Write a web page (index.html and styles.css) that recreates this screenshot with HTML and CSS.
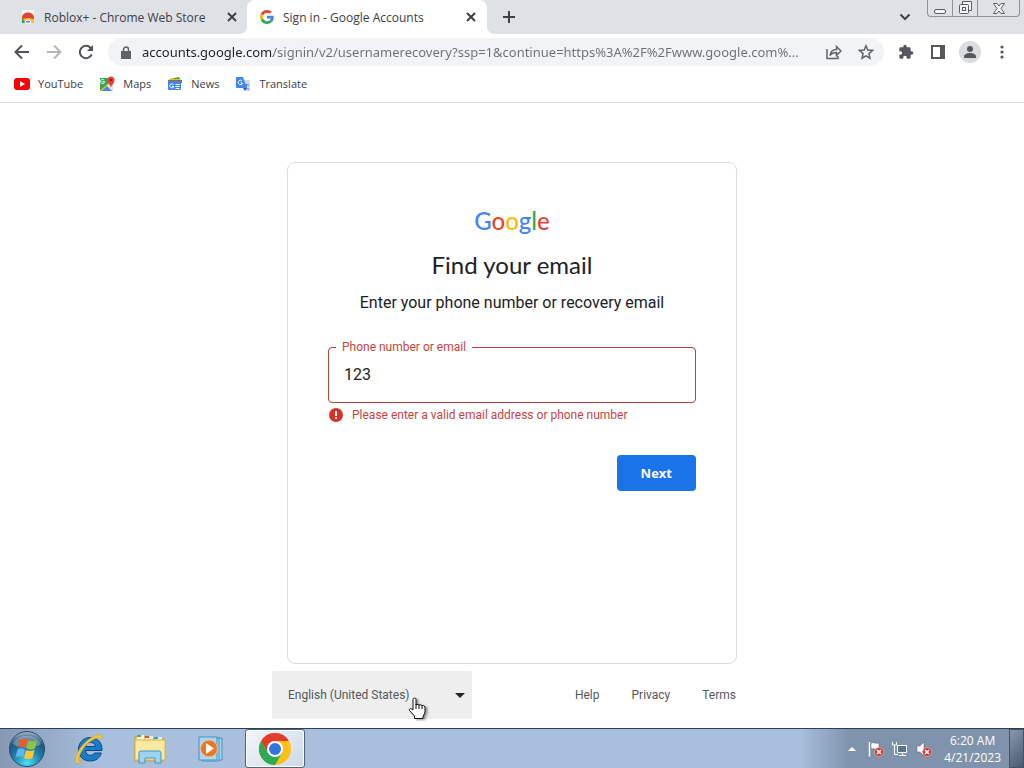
FILE: index.html
```html
<!DOCTYPE html>
<html lang="en">
  <head>
    <meta charset="utf-8" />
    <meta name="viewport" content="width=device-width, initial-scale=1.0" />
    <title>Sign in - Google Accounts</title>
    <link rel="stylesheet" href="styles.css">
  </head>

  <body>
    <!-- ______TABS______ -->
    <header class="tabstrip">
      <div class="tab">
        <svg class="favicon" viewBox="0 0 16 16">
          <path d="M2 1h12v12H2z" fill="#f4f5f6" />
          <path d="M2 14V9a6 5 0 0 1 12 0v5z" fill="#fbc02d" />
          <path d="M2 10V8.500a6 5 0 0 1 12 0V10l-6-1z" fill="#db4437" />
          <path d="M2 9l4 5H2z" fill="#2e9d57" />
          <path d="M5 14a3 3 0 0 1 6 0z" fill="#4285f4" stroke="#fff" />
        </svg>
        <span class="tab-title">Roblox+ - Chrome Web Store</span>
        <button class="icon-btn" aria-label="Close tab">
          <svg class="cross" viewBox="0 0 10 10"><path d="M1 1l8 8M9 1L1 9" /></svg>
        </button>
      </div>
      <div class="tab active">
        <svg class="favicon" viewBox="0 0 48 48">
          <path fill="#EA4335" d="M24 9.500c3.540 0 6.710 1.220 9.210 3.600l6.850-6.850C35.900 2.380 30.470 0 24 0 14.620 0 6.510 5.380 2.560 13.220l7.980 6.190C12.430 13.720 17.740 9.500 24 9.500z" />
          <path fill="#4285F4" d="M46.980 24.550c0-1.570-.15-3.090-.38-4.550H24v9.020h12.940c-.58 2.960-2.260 5.480-4.780 7.180l7.730 6c4.510-4.180 7.090-10.360 7.090-17.650z" />
          <path fill="#FBBC05" d="M10.530 28.590c-.48-1.450-.76-2.990-.76-4.590s.27-3.140.76-4.590l-7.980-6.190C.92 16.460 0 20.120 0 24c0 3.880.92 7.540 2.560 10.780z" />
          <path fill="#34A853" d="M24 48c6.480 0 11.930-2.130 15.890-5.810l-7.730-6c-2.150 1.450-4.920 2.300-8.160 2.300-6.260 0-11.570-4.220-13.470-9.910l-7.980 6.190C6.510 42.620 14.620 48 24 48z" />
        </svg>
        <span class="tab-title">Sign in - Google Accounts</span>
        <button class="icon-btn" aria-label="Close tab">
          <svg class="cross" viewBox="0 0 10 10"><path d="M1 1l8 8M9 1L1 9" /></svg>
        </button>
      </div>
      <button class="icon-btn new-tab" aria-label="New tab">
        <svg class="plus" viewBox="0 0 12 12"><path d="M6 0v12M0 6h12" /></svg>
      </button>
      <button class="icon-btn tab-search" aria-label="Search tabs">
        <svg class="chevron" viewBox="0 0 12 8"><path d="M1.500 1.500L6 6l4.500-4.500" /></svg>
      </button>
      <div class="window-buttons">
        <button aria-label="Minimize">
          <svg viewBox="0 0 14 14"><rect x="1.500" y="8.500" width="11" height="4" rx="1.500" /></svg>
        </button>
        <button aria-label="Restore">
          <svg viewBox="0 0 14 14"><path d="M4.500 3.500v-3h9v9h-3" /><rect x="1.500" y="3.500" width="9" height="9" rx="1" /><rect x="4.500" y="6.500" width="3" height="3" /></svg>
        </button>
        <button class="wide" aria-label="Close">
          <svg viewBox="0 0 14 14"><path d="M1.500 2.500h3.500l2 2.500 2-2.500h3.500L9 7.500l3.500 5H9l-2-2.500-2 2.500H1.500l3.500-5z" /></svg>
        </button>
      </div>
    </header>

    <!-- ______ADDRESS BAR______ -->
    <nav class="toolbar">
      <button class="icon-btn" aria-label="Back">
        <svg class="nav-icon" viewBox="0 0 16 16"><path d="M15 8H2M8 1.500L1.500 8 8 14.500" /></svg>
      </button>
      <button class="icon-btn" aria-label="Forward" disabled>
        <svg class="nav-icon" viewBox="0 0 16 16"><path d="M1 8h13M8 1.500L14.500 8 8 14.500" /></svg>
      </button>
      <button class="icon-btn" aria-label="Reload">
        <svg class="nav-icon" viewBox="0 0 16 16"><path d="M13.700 10.500A6.200 6.200 0 1 1 12.600 3.800L14 5.200" /><path class="solid" d="M15 1v6H9z" /></svg>
      </button>
      <div class="omnibox">
        <svg class="lock" viewBox="0 0 10 13"><path d="M0 5h10v8H0z" fill="#5f6368" /><path d="M2.500 5.500V3.500a2.500 2.500 0 0 1 5 0v2" fill="none" stroke="#5f6368" stroke-width="1.500" /></svg>
        <input class="url" type="text" aria-label="Address" value="accounts.google.com/signin/v2/usernamerecovery?ssp=1&amp;continue=https%3A%2F%2Fwww.google.com%..." />
        <button class="icon-btn" aria-label="Share">
          <svg class="thin-icon" viewBox="0 0 16 16"><path d="M1 5v9.500h11V12" /><path d="M4 11.500c.5-4 3-6 6.500-6v-3L15 7l-4.500 4.500v-3c-3 0-5 .8-6.500 3z" /></svg>
        </button>
        <button class="icon-btn" aria-label="Bookmark this tab">
          <svg class="thin-icon" viewBox="0 0 16 16"><path d="M8 1.800l1.800 4.300 4.700.4-3.600 3.100 1.100 4.600L8 11.800l-4 2.400 1.100-4.600L1.500 6.500l4.700-.4z" /></svg>
        </button>
      </div>
      <button class="icon-btn" aria-label="Extensions">
        <svg class="fill-icon" viewBox="0 0 24 24"><path d="M20.500 11H19V7c0-1.100-.9-2-2-2h-4V3.500a2.500 2.500 0 0 0-5 0V5H4c-1.100 0-2 .9-2 2v3.800h1.500a2.700 2.700 0 0 1 0 5.400H2V20c0 1.100.9 2 2 2h3.800v-1.500a2.700 2.700 0 0 1 5.400 0V22H17c1.100 0 2-.9 2-2v-4h1.500a2.500 2.500 0 0 0 0-5z" /></svg>
      </button>
      <button class="icon-btn" aria-label="Side panel">
        <svg class="fill-icon" viewBox="0 0 16 16"><path fill-rule="evenodd" d="M1 1h14v14H1zm2 2v10h7V3z" /></svg>
      </button>
      <button class="icon-btn avatar" aria-label="Profile">
        <svg class="fill-icon" viewBox="0 0 16 16"><circle cx="8" cy="5" r="3" /><path d="M2 13c0-3 3-4 6-4s6 1 6 4v1H2z" /></svg>
      </button>
      <button class="icon-btn" aria-label="Menu">
        <svg class="fill-icon" viewBox="0 0 16 16"><circle cx="8" cy="3" r="1.600" /><circle cx="8" cy="8" r="1.600" /><circle cx="8" cy="13" r="1.600" /></svg>
      </button>
    </nav>

    <!-- ______BOOKMARKS______ -->
    <nav class="bookmarks">
      <a href="#">
        <svg viewBox="0 0 16 16"><rect y="2" width="16" height="12" rx="3" fill="#f00" /><path d="M6 5l5 3-5 3z" fill="#fff" /></svg>
        YouTube
      </a>
      <a href="#">
        <svg viewBox="0 0 16 16">
          <path d="M1 2h13v13H1z" fill="#e8eaed" />
          <path d="M1 2h10v4l-10 9z" fill="#34a853" />
          <path d="M1 15L12 5l2 2-8 8z" fill="#fbbc05" />
          <path d="M3 15l5-5 5 5z" fill="#4285f4" />
          <path d="M8 10l6 5V8l-3-1z" fill="#dfe3e8" />
          <path d="M3.500 5.500h2a2 2 0 1 1-.6-1.500" fill="none" stroke="#fff" />
          <path d="M12 12c0-3-3.500-4-3.500-8a3.500 3.500 0 0 1 7 0c0 4-3.500 5-3.500 8z" fill="#ea4335" />
          <circle cx="12" cy="4" r="1.300" fill="#8c1d18" />
        </svg>
        Maps
      </a>
      <a href="#">
        <svg viewBox="0 0 16 16">
          <path d="M3 3l9-2 2 4H3z" fill="#34a853" />
          <path d="M2 3h11l1 4H2z" fill="#fbbc05" />
          <path d="M1 4h14v3H1z" fill="#6e7480" />
          <rect x="1" y="6" width="13" height="8" rx="1" fill="#4285f4" />
          <path d="M6.500 8.700a2 2 0 1 0 .3 1.800H5M8.500 8.500h4M8.500 10.500h4M8.500 12.500h4" fill="none" stroke="#fff" />
        </svg>
        News
      </a>
      <a href="#">
        <svg viewBox="0 0 16 16">
          <path d="M7 4h8v11H10z" fill="#d5dae2" />
          <path d="M9 9h5M11.500 8v1c0 2-1 3-2 4M10 10c1 2 2 3 4 3" fill="none" stroke="#5f7fbf" />
          <path d="M1 1h7l4 11H2a1 1 0 0 1-1-1z" fill="#4285f4" />
          <path d="M8 12h4l-2 3z" fill="#2a56c6" />
          <path d="M7 5a2.200 2.200 0 1 0 .5 2H5.500" fill="none" stroke="#fff" />
        </svg>
        Translate
      </a>
    </nav>

    <!-- ______SIGN IN PAGE______ -->
    <main>
      <form class="card">
        <div class="logo" aria-label="Google"><span class="blue">G</span><span class="red">o</span><span class="yellow">o</span><span class="blue">g</span><span class="green">l</span><span class="red">e</span></div>
        <h1>Find your email</h1>
        <p class="subtitle">Enter your phone number or recovery email</p>
        <fieldset class="field">
          <legend><label for="identifier">Phone number or email</label></legend>
          <input id="identifier" type="text" value="123" aria-describedby="error" />
        </fieldset>
        <p class="error" id="error">
          <svg viewBox="0 0 16 16"><circle cx="8" cy="8" r="7" fill="#d93025" /><path d="M7 4h2v5H7zM7 10h2v2H7z" fill="#fff" /></svg>
          Please enter a valid email address or phone number
        </p>
        <button class="next" type="button">Next</button>
      </form>

      <footer>
        <div class="language">
          <select aria-label="Language">
            <option>English (United States)</option>
          </select>
          <!-- mouse pointer -->
          <svg class="pointer" viewBox="0 0 18 24">
            <path d="M5 14V3.500a1.500 1.500 0 0 1 3 0V9l1-.8 2 .8 1.500-.3 1.500 1 1.500-.2 1.500 1.500v5L15 21v1.500H6.500V20L1.500 14.500c-.8-1.500.8-2.500 2-1.500z" fill="#fff" stroke="#111" />
            <path d="M8 8v5M11 9v4M14 10v3" stroke="#111" fill="none" />
          </svg>
        </div>
        <a href="#">Help</a>
        <a href="#">Privacy</a>
        <a href="#">Terms</a>
      </footer>
    </main>

    <!-- ______TASKBAR______ -->
    <div class="taskbar">
      <button class="start" aria-label="Start">
        <svg viewBox="0 0 38 38">
          <defs>
            <radialGradient id="orb" cx=".5" cy=".9" r=".9">
              <stop offset="0" stop-color="#4fe0f4" />
              <stop offset=".45" stop-color="#1d7fae" />
              <stop offset=".75" stop-color="#24557f" />
              <stop offset="1" stop-color="#a8bccb" />
            </radialGradient>
          </defs>
          <circle cx="19" cy="19" r="17.500" fill="url(#orb)" stroke="#294a68" />
          <path d="M5 14a15 13 0 0 1 28 0c-8 5-20 5-28 0z" fill="#fff" opacity=".3" />
          <path d="M12 10c3-2 5-1 7.500 0l-2 8c-2-1-4.500-2-7.500 0z" fill="#f0592a" />
          <path d="M20.500 10.500c3 1.500 5 1 8.500 0l-2 8c-3 1.500-5.500 1-8.500 0z" fill="#8cc63e" />
          <path d="M9.500 19.500c3-2 5-1 7.500 0l-2 8c-2-1-4.500-2-7.500 0z" fill="#5cb8ef" />
          <path d="M18 20c3 1.500 5 1 8.500 0l-2 8c-3 1.500-5.500 1-8.500 0z" fill="#fdc72f" />
        </svg>
      </button>
      <button class="app" aria-label="Internet Explorer">
        <svg viewBox="0 0 32 32">
          <path fill-rule="evenodd" d="M29 17.500H12.500c.3 3 2 4.800 4.800 4.800 2 0 3.400-.8 4.200-2.300h6.800c-1.500 5.500-6 8-11 8C10.500 28 5.500 23.500 5.500 16.500S10.500 4.500 17.300 4.500 29.500 9.500 29 17.500zM12.500 13.500h9.800c-.3-2.500-2-4-4.800-4s-4.700 1.500-5 4z" fill="#1a7cc9" stroke="#0c4780" />
          <path d="M4 30C-1 28 6 14 15 7c6-5 13-7 14-4 .5 1.500 0 3-1 4 0-3-4-3-10 1C10 13 4 25 6 28c1 1 2 .5 5-1-2 2-5 4-7 3z" fill="#f6c83a" stroke="#d39b1c" stroke-width=".5" />
        </svg>
      </button>
      <button class="app" aria-label="Windows Explorer">
        <svg viewBox="0 0 32 32">
          <path d="M1 4h13l2 2h14v22H1z" fill="#edcf68" stroke="#c59c38" />
          <path d="M3 2h7v5H3z" fill="#f5f0d0" /><path d="M3 2h4v2H3z" fill="#4caf50" />
          <path d="M11 3h8v5h-8z" fill="#f5f0d0" /><path d="M11 3h4v2h-4z" fill="#d7573c" />
          <path d="M20 4h8v4h-8z" fill="#e8f0f7" /><path d="M20 4h4v2h-4z" fill="#4794c4" />
          <path d="M1 7h30v20H1z" fill="#fae9a0" stroke="#d4b04b" />
          <path d="M5 30V20a2 2 0 0 1 2-2h18a2 2 0 0 1 2 2v10h-6v-5H11v5z" fill="#9ad4f0" stroke="#4794c4" />
        </svg>
      </button>
      <button class="app" aria-label="Windows Media Player">
        <svg viewBox="0 0 32 32">
          <path d="M9 5h18v22H9z" fill="#a6d4ee" stroke="#4191c1" />
          <path d="M7 5h17v23H7z" fill="#bfe1f4" stroke="#4191c1" />
          <path d="M4 4h18v23H4z" fill="#a9d8ef" stroke="#4191c1" />
          <circle cx="14" cy="15.500" r="8.500" fill="#ee7623" stroke="#e9c3a2" />
          <path d="M11 10l8 5.500-8 5.500z" fill="#fff" />
        </svg>
      </button>
      <button class="app running" aria-label="Google Chrome">
        <svg viewBox="0 0 32 32">
          <circle cx="16" cy="16" r="16" fill="#fbc116" />
          <path d="M2.140 8A16 16 0 0 0 16 32l6.930-12L16 16 9.070 20z" fill="#2da94f" />
          <path d="M2.140 8l6.930 12L16 8H29.860A16 16 0 0 0 2.140 8z" fill="#e33b2e" />
          <circle cx="16" cy="16" r="8" fill="#fff" />
          <circle cx="16" cy="16" r="6" fill="#3274e0" />
        </svg>
      </button>

      <div class="tray">
        <svg class="tray-arrow" viewBox="0 0 8 4"><path d="M4 0l4 4H0z" fill="#fff" /></svg>
        <svg viewBox="0 0 16 16">
          <path d="M1.500 1v14.500" stroke="#fff" stroke-width="1.500" /><path d="M3 2c3-1 4 1 8 0v6c-4 1-5-1-8 0z" fill="#fff" stroke="#4c5c6d" stroke-width=".5" />
          <circle cx="11" cy="11" r="4.500" fill="#d63a31" stroke="#f3c6c1" stroke-width=".5" /><path d="M9 9l4 4M13 9l-4 4" stroke="#fff" stroke-width="1.500" />
        </svg>
        <svg viewBox="0 0 16 16">
          <path d="M5.500 4.500h9v7h-9zM7 14.500h7M10.500 12v2" fill="#5d7188" stroke="#fff" /><path d="M.5 1v3h4V1M2.500 4v9.500H6" fill="none" stroke="#fff" />
        </svg>
        <svg viewBox="0 0 16 16">
          <path d="M1 5h3l4-4v14l-4-4H1z" fill="#fff" stroke="#4c5c6d" stroke-width=".5" />
          <circle cx="11" cy="11" r="4.500" fill="#d63a31" stroke="#f3c6c1" stroke-width=".5" /><path d="M9 9l4 4M13 9l-4 4" stroke="#fff" stroke-width="1.500" />
        </svg>
        <div class="clock">6:20 AM<br />4/21/2023</div>
        <button class="show-desktop" aria-label="Show desktop"></button>
      </div>
    </div>
  </body>
</html>
```
FILE: styles.css
```css
* {
  box-sizing: border-box;
}

body {
  margin: 0;
  min-height: 100vh;
  display: flex;
  flex-direction: column;
  font-family: "Open Sans", "Noto Sans", sans-serif;
  font-size: 12px;
  color: #3c4043;
  background-color: #fff;
}

button {
  font: inherit;
  padding: 0;
  border: none;
  background: none;
}

a {
  color: inherit;
  text-decoration: none;
}

svg {
  display: block;
  flex: none;
}

.icon-btn {
  display: flex;
  align-items: center;
  justify-content: center;
  flex: none;
  width: 32px;
  height: 28px;
}

/*_____TABS_____*/

.tabstrip {
  display: flex;
  height: 34px;
  background-color: #dee1e6;
}

.tab {
  display: flex;
  align-items: center;
  gap: 8px;
  flex: 0 1 247px;
  padding: 0 3px 0 20px;
}

.tab.active {
  position: relative;
  flex-basis: 240px;
  padding: 0 4px 0 12px;
  border-radius: 8px 8px 0 0;
  background-color: #fff;
}

/* curved feet of the active tab */
.active::before,
.active::after {
  content: "";
  position: absolute;
  bottom: 0;
  width: 8px;
  height: 8px;
}

.active::before {
  right: 100%;
  background: radial-gradient(circle at 0 0, transparent 8px, #fff 8px);
}

.active::after {
  left: 100%;
  background: radial-gradient(circle at 100% 0, transparent 8px, #fff 8px);
}

.tab-title {
  flex: 1;
  white-space: nowrap;
  overflow: hidden;
}

.tab .icon-btn {
  width: 24px;
}

.favicon {
  width: 16px;
  height: 16px;
}

.active .favicon {
  width: 14px;
  height: 14px;
  margin: 0 1px;
}

.cross,
.plus,
.chevron {
  width: 10px;
  fill: none;
  stroke: #3c4043;
  stroke-width: 2;
}

.plus,
.chevron {
  width: 12px;
}

.new-tab {
  align-self: center;
  margin-left: 6px;
}

.tab-search {
  align-self: center;
  margin-left: auto;
}

.window-buttons {
  display: flex;
  height: 17px;
  margin: 0 4px 0 6px;
  border: 1px solid #8d9299;
  border-top: none;
  border-radius: 0 0 4px 4px;
}

.window-buttons button {
  display: flex;
  justify-content: center;
  align-items: center;
  width: 25px;
  border-right: 1px solid #8d9299;
}

.window-buttons .wide {
  width: 41px;
  border-right: none;
}

.window-buttons svg {
  width: 14px;
  height: 14px;
  fill: #f1f3f5;
  stroke: #5a5e66;
}

/*_____ADDRESS BAR_____*/

.toolbar {
  display: flex;
  align-items: center;
  height: 36px;
  padding: 0 6px;
}

.nav-icon {
  width: 16px;
  height: 16px;
  fill: none;
  stroke: #505357;
  stroke-width: 2;
}

.nav-icon .solid {
  fill: #505357;
  stroke: none;
}

.icon-btn:disabled .nav-icon {
  stroke: #b5b7ba;
}

.omnibox {
  display: flex;
  align-items: center;
  flex: 1;
  height: 28px;
  margin: 0 6px;
  padding: 0 2px 0 13px;
  border-radius: 14px;
  background-color: #f1f3f4;
}

.lock {
  width: 10px;
  height: 13px;
}

/* domain is dark, the rest of the address is grey */
.url {
  flex: 1;
  min-width: 0;
  margin-left: 11px;
  padding: 0;
  border: none;
  font: 13px "Noto Sans", "Open Sans", sans-serif;
  background: linear-gradient(to right, #202124 131px, #6b6f74 131px);
  background-clip: text;
  -webkit-background-clip: text;
  -webkit-text-fill-color: transparent;
}

.thin-icon {
  width: 16px;
  height: 16px;
  fill: none;
  stroke: #5f6368;
  stroke-width: 1.5;
}

.fill-icon {
  width: 16px;
  height: 16px;
  fill: #54585c;
}

.avatar::before {
  content: "";
  width: 22px;
  height: 22px;
  margin-right: -19px;
  border-radius: 50%;
  background-color: #dadce0;
}

.avatar .fill-icon {
  margin-right: 3px;
}

/*_____BOOKMARKS_____*/

.bookmarks {
  display: flex;
  align-items: center;
  gap: 16px;
  height: 33px;
  padding: 0 14px 5px;
  border-bottom: 1px solid #dadce0;
  font-size: 11px;
}

.bookmarks a {
  display: flex;
  align-items: center;
  gap: 8px;
}

.bookmarks svg {
  width: 16px;
  height: 16px;
}

/*_____SIGN IN PAGE_____*/

main {
  flex: 1;
  padding: 59px 16px 0;
  font-family: Roboto, sans-serif;
}

.card {
  display: flex;
  flex-direction: column;
  max-width: 450px;
  min-height: 502px;
  margin: 0 auto;
  padding: 40px;
  border: 1px solid #dadce0;
  border-radius: 8px;
  color: #202124;
}

.logo {
  text-align: center;
  font: 500 24px/36px Lato, sans-serif;
}

.blue {
  color: #4285f4;
}

.red {
  color: #ea4335;
}

.yellow {
  color: #fbbc05;
}

.green {
  color: #34a853;
}

h1 {
  margin: 10px 0 0;
  text-align: center;
  font: 24px/32px Lato, sans-serif;
}

.subtitle {
  margin: 10px 0 0;
  text-align: center;
  font-size: 16px;
  line-height: 24px;
}

.field {
  margin: 25px 0 0;
  padding: 0 15px;
  height: 63px;
  border: 1px solid #b3403c;
  border-radius: 4px;
}

.field legend {
  margin-left: -8px;
  padding: 0 6px;
  font-size: 12px;
  line-height: 14px;
  color: #c5443e;
}

.field input {
  display: block;
  width: 100%;
  height: 40px;
  padding: 0;
  border: none;
  outline: none;
  font: 16px Roboto, sans-serif;
  color: #202124;
}

.error {
  display: flex;
  align-items: center;
  gap: 8px;
  margin: 4px 0 0;
  line-height: 16px;
  color: #c5443e;
}

.error svg {
  width: 16px;
  height: 16px;
}

.next {
  align-self: flex-end;
  height: 36px;
  margin-top: 32px;
  padding: 0 24px;
  border-radius: 4px;
  font: bold 13px "Open Sans", sans-serif;
  color: #fff;
  background-color: #1a73e8;
}

footer {
  display: flex;
  align-items: center;
  gap: 32px;
  max-width: 480px;
  margin: 7px auto 9px;
  padding-right: 16px;
  color: #55585c;
}

.language {
  position: relative;
  margin-right: auto;
}

.language::after {
  content: "";
  position: absolute;
  right: 7px;
  top: 22px;
  border: 5px solid transparent;
  border-top-color: #202124;
  border-bottom: none;
}

select {
  appearance: none;
  width: 200px;
  height: 48px;
  padding: 0 16px;
  border: none;
  border-radius: 2px;
  font: 12px Roboto, sans-serif;
  color: #55585c;
  background-color: #eee;
}

.pointer {
  position: absolute;
  left: 136px;
  top: 25px;
  z-index: 1;
  width: 18px;
  height: 24px;
  filter: drop-shadow(2px 1px 1px rgba(0, 0, 0, 0.4));
}

/*_____TASKBAR_____*/

.taskbar {
  display: flex;
  height: 40px;
  border-top: 1px solid #2f3e52;
  background: linear-gradient(to right, #8598b4, #a8c0de 10%, #a8c0de 78%, #7f93ad 83%, #7f93ad);
}

.start {
  width: 54px;
  padding: 0 8px;
}

.start svg {
  width: 38px;
  height: 38px;
}

.app {
  display: flex;
  align-items: center;
  justify-content: center;
  width: 60px;
  margin-left: 1px;
}

.app:nth-child(2) {
  margin-left: 5px;
}

.app svg {
  width: 32px;
  height: 32px;
}

.running {
  margin-left: 4px;
  border: 1px solid #4f6379;
  border-radius: 3px;
  background: linear-gradient(135deg, #f3f6fa, #cdd9e8);
  box-shadow: inset 0 0 0 1px #fff;
}

.tray {
  display: flex;
  align-items: center;
  gap: 8px;
  margin-left: auto;
  color: #fff;
}

.tray svg {
  width: 16px;
  height: 16px;
}

.tray .tray-arrow {
  width: 8px;
  height: 4px;
  margin-right: 4px;
}

.clock {
  margin-left: 4px;
  text-align: center;
  line-height: 17px;
}

.show-desktop {
  width: 15px;
  height: 39px;
  border: 1px solid #42546a;
  background: linear-gradient(135deg, #8798ab, #4a5b70);
}
```
